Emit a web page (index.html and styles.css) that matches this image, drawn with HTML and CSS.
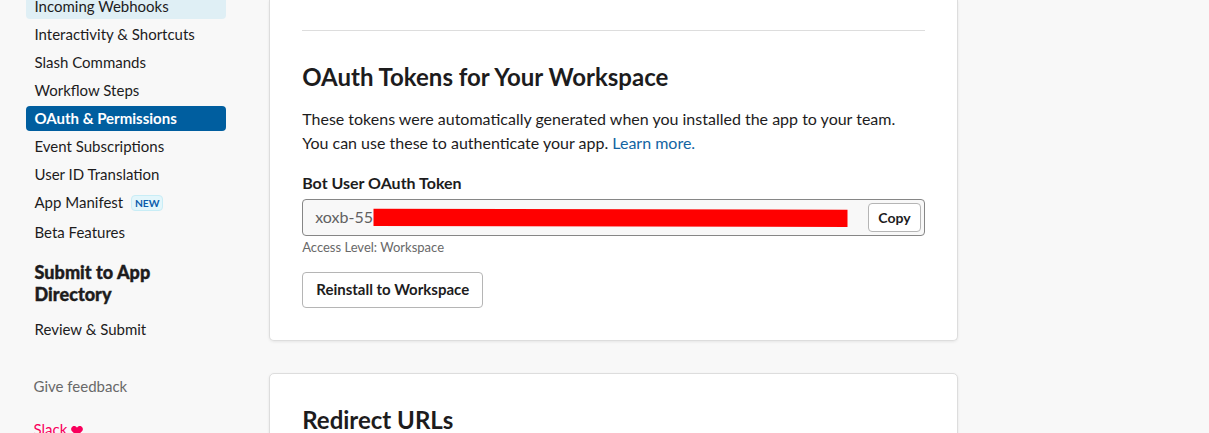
FILE: index.html
```html
<!DOCTYPE html>
<html lang="en">
<head>
<meta charset="utf-8">
<title>OAuth &amp; Permissions</title>
<link rel="stylesheet" href="styles.css">
</head>
<body>
<div class="page">
  <nav class="sidebar">
    <ul class="menu">
      <li class="item item-hover">Incoming Webhooks</li>
      <li class="item">Interactivity &amp; Shortcuts</li>
      <li class="item">Slash Commands</li>
      <li class="item">Workflow Steps</li>
      <li class="item item-active">OAuth &amp; Permissions</li>
      <li class="item">Event Subscriptions</li>
      <li class="item">User ID Translation</li>
      <li class="item item-tagged"><span>App Manifest</span><span class="badge">NEW</span></li>
      <li class="item">Beta Features</li>
    </ul>
    <h3 class="menu-title">Submit to App Directory</h3>
    <ul class="menu">
      <li class="item">Review &amp; Submit</li>
    </ul>
    <div class="feedback">Give feedback</div>
    <div class="slack"><span>Slack</span><svg class="heart" viewBox="0 0 12 10"><path d="M6 10 1 5.300C-.5 3.800 0 1.300 1.600.4 3.200-.3 5.300.2 6 1.800 6.700.2 8.800-.3 10.400.4 12 1.300 12.500 3.800 11 5.300Z"/></svg></div>
  </nav>
  <main class="content">
    <section class="card card-tokens">
      <hr class="rule">
      <h2 class="title">OAuth Tokens for Your Workspace</h2>
      <p class="text">These tokens were automatically generated when you installed the app to your team.<br>You can use these to authenticate your app. <a class="link">Learn more.</a></p>
      <div class="label">Bot User OAuth Token</div>
      <div class="token">
        <span class="token-value">xoxb-55</span>
        <svg class="redaction" viewBox="0 0 475 19"><path fill="#f00" d="M.5 .7 474.500 1.700V19L.5 18Z"/></svg>
        <button class="btn btn-copy">Copy</button>
      </div>
      <div class="hint">Access Level: Workspace</div>
      <button class="btn btn-reinstall">Reinstall to Workspace</button>
    </section>
    <section class="card card-redirect">
      <h2 class="title">Redirect URLs</h2>
    </section>
  </main>
</div>
</body>
</html>
```

FILE: styles.css
```css
* { box-sizing: border-box; }
html, body { height: 100%; }
body {
  margin: 0;
  overflow: hidden;
  background: #f8f8f8;
  color: #1d1c1d;
  font: 15px/25px Lato, "Liberation Sans", sans-serif;
}
.page { display: flex; height: 433px; overflow: hidden; }
.sidebar { width: 226px; margin: -6px 43px 0 0; padding-left: 26px; flex: none; }
.menu { list-style: none; margin: 0; padding: 0; }
.item { height: 25px; margin-bottom: 3px; padding-left: 8.500px; border-radius: 4px; }
.item-hover { background: #dfeff5; }
.item-active { background: #005e9f; color: #fff; font-weight: 700; }
.item-tagged { display: flex; height: 27px; }
.badge {
  width: 32px;
  height: 16px;
  margin: 5px 0 0 8px;
  border: 1px solid #c8edf6;
  border-radius: 4px;
  background: #e3f6fb;
  color: #0b5cab;
  font-size: 10.3px;
  font-weight: 700;
  line-height: 15px;
  text-align: center;
}
.menu-title {
  margin: 16px 0 12px;
  padding: 0 60px 0 8.500px;
  font-size: 18px;
  font-weight: 900;
  line-height: 22px;
  letter-spacing: .05px;
  -webkit-text-stroke: .4px currentColor;
}
.feedback { margin-top: 32px; padding-left: 7.500px; color: #696969; }
.slack { display: flex; align-items: center; gap: 4px; margin-top: 18px; padding-left: 7.500px; color: #f9005c; }
.heart { width: 12px; height: 10px; margin-top: 3px; fill: currentColor; }
.content { width: 689px; flex: none; }
.card { padding: 0 32px; background: #fff; border: 1px solid #ddd; box-shadow: 0 1px 3px rgba(0, 0, 0, .08); }
.card-tokens { height: 341px; padding-top: 30px; border-top: 0; border-radius: 0 0 5px 5px; }
.card-redirect { height: 100px; margin-top: 32px; padding-top: 30px; border-radius: 5px 5px 0 0; }
.rule { margin: 0 0 30px; border: 0; border-top: 1px solid #ddd; }
.title { margin: 0; padding-left: .2px; font-size: 24px; font-weight: 700; line-height: 32px; }
.text { margin: 14px 0 0; padding-left: .2px; font-size: 16px; line-height: 24px; }
.link { color: #1264a3; }
.label { margin-top: 15px; padding-left: .2px; font-size: 16px; font-weight: 700; }
.token {
  display: flex;
  align-items: center;
  height: 37px;
  margin-top: 4px;
  padding: 0 3px 0 12px;
  border: 1px solid #868686;
  border-radius: 4px;
  background: #f8f8f8;
  color: #616061;
  font-size: 16px;
}
.token-value { width: 58px; padding-left: .2px; margin-top: -2px; white-space: nowrap; }
.redaction { width: 475px; height: 19px; }
.hint { margin-top: 1px; padding-left: .2px; color: #696969; font-size: 13px; line-height: 20px; }
.btn { padding: 0; border: 1px solid #b5b5b5; border-radius: 4px; background: #fff; color: #1d1c1d; font-family: inherit; font-weight: 700; }
.btn-copy { width: 53px; height: 29px; margin-left: auto; font-size: 14px; }
.btn-reinstall { display: block; width: 181px; height: 36px; margin-top: 15px; padding: 0 0 2px .4px; font-size: 15px; }
```
